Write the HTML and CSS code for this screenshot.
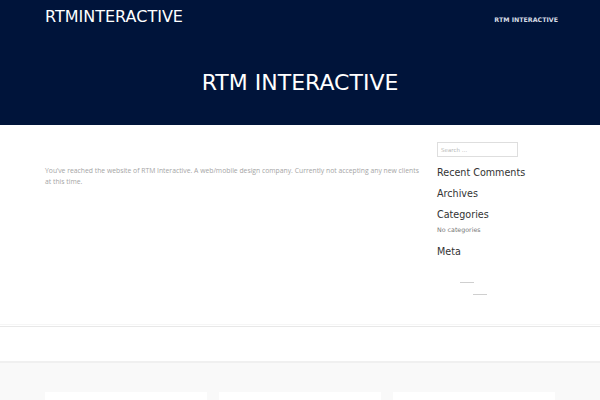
FILE: index.html
```html
<!DOCTYPE html>
<html>
<head>
<meta charset="utf-8">
<link rel="stylesheet" href="styles.css">
</head>
<body>
<header class="masthead">
  <div class="topbar">
    <div class="brand">RTMINTERACTIVE</div>
    <nav class="nav"><a>RTM INTERACTIVE</a></nav>
  </div>
  <h1 class="hero-title">RTM INTERACTIVE</h1>
</header>
<div class="content">
  <main class="main">
    <p class="intro">You’ve reached the website of RTM Interactive. A web/mobile design company. Currently not accepting any new clients at this time.</p>
  </main>
  <aside class="sidebar">
    <div class="search"><span class="placeholder">Search …</span></div>
    <h3 class="widget-title first">Recent Comments</h3>
    <h3 class="widget-title">Archives</h3>
    <h3 class="widget-title">Categories</h3>
    <p class="widget-note">No categories</p>
    <h3 class="widget-title">Meta</h3>
    <div class="ghost">
      <span class="ghost-line one"></span>
      <span class="ghost-line two"></span>
    </div>
  </aside>
</div>
<div class="divider"></div>
<footer class="footer">
  <div class="cards">
    <div class="card"></div>
    <div class="card"></div>
    <div class="card"></div>
  </div>
</footer>
</body>
</html>
```
FILE: styles.css
```css
* { box-sizing: border-box; }
html, body { margin: 0; padding: 0; }
body {
  font-family: "DejaVu Sans", sans-serif;
  background: #fff;
  width: 600px;
  height: 400px;
  overflow: hidden;
}
.masthead {
  background: #00143a;
  height: 125px;
  color: #fff;
  display: flex;
  flex-direction: column;
}
.topbar {
  display: flex;
  justify-content: space-between;
  align-items: flex-start;
  padding: 7px 42px 0 45px;
}
.brand {
  font-size: 16px;
  line-height: 19px;
}
.nav a {
  display: block;
  font-size: 6.3px;
  font-weight: bold;
  line-height: 8px;
  margin-top: 9px;
  color: #d6dbe4;
}
.hero-title {
  margin: 0;
  margin-top: 44px;
  text-align: center;
  font-weight: normal;
  font-size: 22px;
  line-height: 26px;
}
.content {
  display: flex;
  padding: 0 45px;
  height: 199px;
}
.main {
  width: 382px;
  padding-top: 40px;
}
.intro {
  margin: 0;
  max-width: 378px;
  font-family: "Open Sans", sans-serif;
  font-size: 6.8px;
  line-height: 11px;
  color: #a5a5a5;
}
.sidebar {
  margin-left: 10px;
  flex: 1;
  padding-top: 17px;
}
.search {
  width: 81px;
  height: 15px;
  border: 1px solid #dedede;
  padding: 2px 3px;
  display: flex;
  align-items: center;
}
.placeholder {
  font-size: 5.5px;
  color: #b8b8b8;
}
.widget-title {
  margin: 9px 0 0;
  font-weight: normal;
  font-size: 9.6px;
  line-height: 12px;
  color: #333;
}
.widget-title.first { margin-top: 10px; }
.widget-note {
  margin: 5px 0 0;
  font-size: 6.3px;
  line-height: 8px;
  color: #777;
}
.widget-note + .widget-title { margin-top: 12px; }
.ghost {
  position: relative;
  height: 30px;
}
.ghost-line {
  position: absolute;
  height: 1px;
  width: 14px;
  background: #cfcfcf;
}
.ghost-line.one { left: 23px; top: 24px; }
.ghost-line.two { left: 36px; top: 36px; }
.divider {
  border-top: 1px solid #f6f6f6;
  border-bottom: 1px solid #e8e8e8;
  height: 3px;
}
.footer {
  margin-top: 34px;
  border-top: 2px solid #f0f0f0;
  background: #f9f9f9;
  height: 40px;
  padding: 29px 45px 0;
}
.cards {
  display: grid;
  grid-template-columns: 1fr 1fr 1fr;
  gap: 12px;
}
.card {
  background: #fff;
  height: 20px;
}
```
